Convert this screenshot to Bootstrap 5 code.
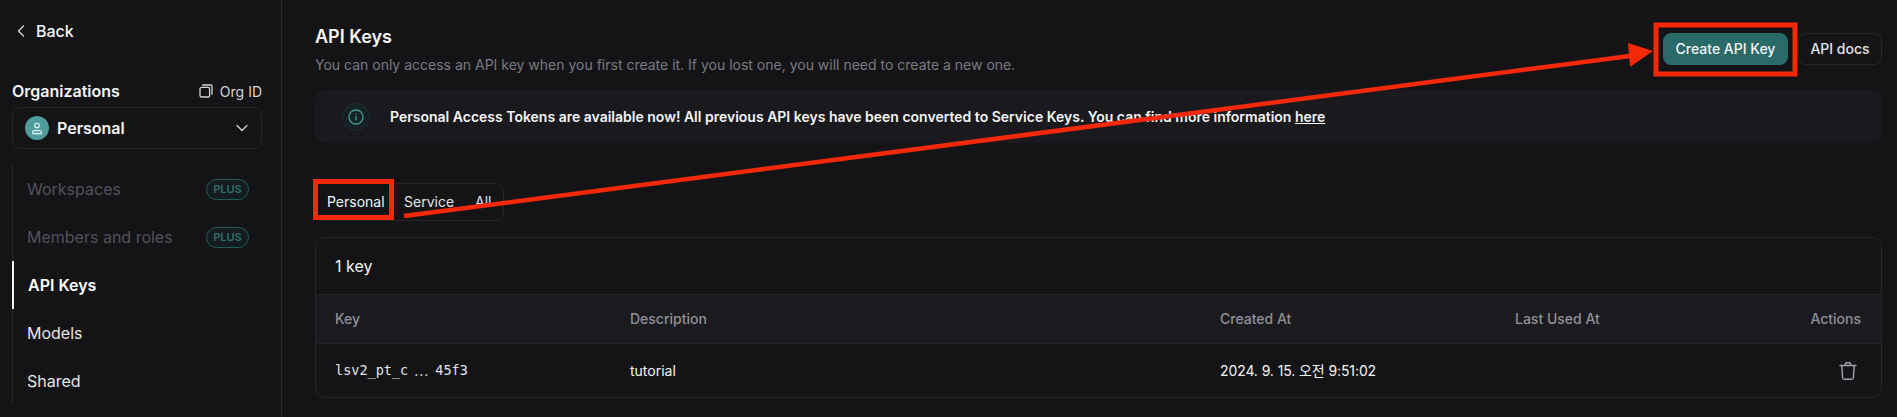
<!DOCTYPE html>
<html lang="ko">
<head>
  <meta charset="UTF-8" />
  <meta name="viewport" content="width=device-width, initial-scale=1" />
  <title>API Keys</title>
  <link href="https://cdn.jsdelivr.net/npm/bootstrap@5.3.0/dist/css/bootstrap.min.css" rel="stylesheet" />
  <style>
    html, body { height: 417px; overflow: hidden; }
    body { background: #141416; color: #f4f4f5; font-family: Inter, "Noto Sans CJK KR", sans-serif; font-size: 14px; }
    .shell { height: 417px; position: relative; }
    .side { width: 282px; flex: none; border-right: 1px solid #26262a; padding: 0 19px 0 12px; }
    .back-link { height: 62px; padding-left: 5px; gap: 11px; font-size: 16px; font-weight: 500; color: #f4f4f5; text-decoration: none; }
    .org-head { margin-top: 17px; height: 24px; }
    .org-title { font-size: 16px; font-weight: 600; }
    .org-id { font-size: 14px; color: #d4d4d8; gap: 7px; }
    .org-select { margin-top: 4px; height: 42px; padding: 0 13px 0 12px; border: 1px solid #26262a; border-radius: 8px; }
    .org-avatar { width: 24px; height: 24px; border-radius: 50%; background: #4f9c9c; margin-right: 8px; }
    .org-name { font-size: 16px; font-weight: 600; }
    .side-nav { margin-top: 16px; border-left: 1px solid #26262a; }
    .side-nav .nav-link { height: 48px; padding: 0 13px 0 13px; font-size: 16px; color: #e4e4e7; margin-left: -1px; border-left: 2px solid transparent; }
    .side-nav .nav-link.disabled { color: #52525b; }
    .side-nav .nav-link.active { color: #fff; font-weight: 600; border-left-color: #f4f4f5; padding-left: 14px; }
    .plus-tag { padding: 0; width: 43px; height: 21px; line-height: 19px; border: 1px solid #1f5e5a; border-radius: 11px; background: #141c1f; color: #2f6f6b; font-size: 11px; font-weight: 600; }
    .page-main { padding: 0 15px 0 33px; min-width: 0; }
    .top-row { padding-top: 25px; height: 90px; }
    .page-title { font-size: 18px; line-height: 24px; font-weight: 600; margin: 0 0 6px; }
    .page-sub { font-size: 14px; line-height: 20px; color: #7a7a82; margin: 0; }
    .top-actions { gap: 10px; padding-top: 8px; }
    .btn-create, .btn-docs { height: 32px; padding: 0; font-size: 14px; font-weight: 500; border-radius: 8px; line-height: 30px; }
    .btn-create { width: 125px; background: #2a6a68; border: 1px solid #2a6a68; color: #f4f4f5; }
    .btn-docs { width: 84px; background: transparent; border: 1px solid #26262a; color: #e4e4e7; }
    .note-box { height: 53px; margin: 0; padding: 0 0 0 27px; border: 0; border-radius: 10px; background: #1a1a1e; color: #f4f4f5; font-weight: 600; gap: 20px; }
    .note-box a { color: #f4f4f5; }
    .note-icon { width: 28px; height: 28px; border-radius: 50%; background: #152125; border: 1px solid #1b2d30; }
    .tab-strip { margin-top: 40px; width: 189px; height: 38px; border: 1px solid #26262a; border-radius: 8px; }
    .tab-strip .nav-link { padding: 0; height: 36px; line-height: 36px; color: #e4e4e7; font-size: 14px; }
    .tab-strip .tab-a { margin-left: 11px; width: 58px; color: #f4f4f5; }
    .tab-strip .tab-b { margin-left: 19px; }
    .tab-strip .tab-c { margin-left: 21px; }
    .key-card { margin-top: 16px; height: 161px; background: transparent; border: 1px solid #26262a; border-radius: 10px; overflow: hidden; color: #f4f4f5; }
    .key-count { height: 57px; flex: none; padding: 0 19px; font-size: 16px; border-bottom: 1px solid #26262a; }
    .key-table { table-layout: fixed; margin: 0; --bs-table-bg: transparent; --bs-table-color: #f4f4f5; }
    .key-table th, .key-table td { padding: 0 0 0 19px; vertical-align: middle; border: 0; font-size: 14px; }
    .key-table thead th { height: 48px; background: #1b1b1f; color: #909098; font-weight: 500; border-bottom: 1px solid #26262a; }
    .key-table tbody td { height: 54px; font-weight: 400; }
    .key-table .col-date { letter-spacing: -.1px; }
    .key-table .col-end { padding: 0 20px 0 0; text-align: right; }
    .key-mono { font-family: "DejaVu Sans Mono", "Liberation Mono", monospace; font-size: 13.5px; color: #e4e4e7; gap: 6px; }
    .key-dots { font-family: Inter, sans-serif; font-size: 14px; letter-spacing: 1px; }
    .trash-btn { background: none; border: 0; padding: 0; margin-right: 4px; color: #a1a1aa; line-height: 0; }
    .mark-layer { position: absolute; left: 0; top: 0; pointer-events: none; }
  </style>
</head>
<body>
  <div class="shell d-flex">
    <aside class="side">
      <a href="#" class="back-link d-flex align-items-center">
        <svg width="8" height="12" viewBox="0 0 8 12" fill="none" stroke="#d4d4d8" stroke-width="1.3" stroke-linecap="round" stroke-linejoin="round"><path d="M6.5 1 1.5 6l5 5"/></svg>
        Back
      </a>
      <div class="org-head d-flex justify-content-between align-items-center">
        <span class="org-title">Organizations</span>
        <span class="org-id d-flex align-items-center">
          <svg width="14" height="14" viewBox="0 0 14 14" fill="none" stroke="#d4d4d8" stroke-width="1.3"><rect x="1" y="3.4" width="9.6" height="9.6" rx="1.6"/><path d="M3.6 1h7.8A1.6 1.6 0 0 1 13 2.6v7.6" stroke-linecap="round"/></svg>
          Org ID
        </span>
      </div>
      <div class="org-select d-flex align-items-center">
        <span class="org-avatar d-flex align-items-center justify-content-center">
          <svg width="12" height="13" viewBox="0 0 12 13" fill="none" stroke="#e6f4f3" stroke-width="1.1"><circle cx="6" cy="3.6" r="2.3"/><path d="M1.6 11.6V10.400a1.800 1.800 0 0 1 1.800-1.800h5.200a1.800 1.800 0 0 1 1.800 1.800v1.200z" stroke-linejoin="round"/></svg>
        </span>
        <span class="org-name flex-grow-1">Personal</span>
        <svg width="12" height="8" viewBox="0 0 12 8" fill="none" stroke="#d4d4d8" stroke-width="1.3" stroke-linecap="round" stroke-linejoin="round"><path d="m1 1.500 5 5 5-5"/></svg>
      </div>
      <nav class="side-nav nav flex-column">
        <a class="nav-link disabled d-flex justify-content-between align-items-center" href="#">Workspaces <span class="badge plus-tag">PLUS</span></a>
        <a class="nav-link disabled d-flex justify-content-between align-items-center" href="#">Members and roles <span class="badge plus-tag">PLUS</span></a>
        <a class="nav-link active d-flex align-items-center" href="#">API Keys</a>
        <a class="nav-link d-flex align-items-center" href="#">Models</a>
        <a class="nav-link d-flex align-items-center" href="#">Shared</a>
      </nav>
    </aside>

    <main class="page-main flex-grow-1">
      <div class="top-row d-flex justify-content-between align-items-start">
        <div>
          <h1 class="page-title">API Keys</h1>
          <p class="page-sub">You can only access an API key when you first create it. If you lost one, you will need to create a new one.</p>
        </div>
        <div class="top-actions d-flex">
          <button type="button" class="btn btn-create">Create API Key</button>
          <button type="button" class="btn btn-docs">API docs</button>
        </div>
      </div>

      <div class="alert note-box d-flex align-items-center" role="alert">
        <span class="note-icon d-flex align-items-center justify-content-center">
          <svg width="16" height="16" viewBox="0 0 16 16" fill="none" stroke="#3d9c94" stroke-width="1.3" stroke-linecap="round"><circle cx="8" cy="8" r="7"/><path d="M8 7.500v3.500M8 5v.1"/></svg>
        </span>
        <span>Personal Access Tokens are available now! All previous API keys have been converted to Service Keys. You can find more information <a href="#">here</a></span>
      </div>

      <nav class="tab-strip nav">
        <a class="nav-link tab-a" href="#">Personal</a>
        <a class="nav-link tab-b" href="#">Service</a>
        <a class="nav-link tab-c" href="#">All</a>
      </nav>

      <div class="card key-card">
        <div class="key-count d-flex align-items-center">1 key</div>
        <table class="table key-table">
          <colgroup>
            <col style="width: 295px" /><col style="width: 590px" /><col style="width: 295px" /><col /><col style="width: 150px" />
          </colgroup>
          <thead>
            <tr><th>Key</th><th>Description</th><th>Created At</th><th>Last Used At</th><th class="col-end">Actions</th></tr>
          </thead>
          <tbody>
            <tr>
              <td><span class="key-mono d-flex align-items-center"><span>lsv2_pt_c</span><span class="key-dots">...</span><span>45f3</span></span></td>
              <td>tutorial</td>
              <td class="col-date">2024. 9. 15. 오전 9:51:02</td>
              <td></td>
              <td class="col-end">
                <button type="button" class="trash-btn" aria-label="Delete">
                  <svg width="18" height="20" viewBox="0 0 18 20" fill="none" stroke="currentColor" stroke-width="1.400" stroke-linecap="round" stroke-linejoin="round"><path d="M1 4.500h16M6.500 4.500V2.800c0-.6.400-1 1-1h3c.6 0 1 .400 1 1v1.700M2.800 4.500l.8 12.300c.1 1 .8 1.500 1.700 1.500h7.400c.9 0 1.600-.5 1.700-1.500l.8-12.300"/></svg>
                </button>
              </td>
            </tr>
          </tbody>
        </table>
      </div>
    </main>

    <!-- red annotation marks drawn over the page -->
    <svg class="mark-layer" width="1897" height="417" viewBox="0 0 1897 417" fill="none">
      <rect x="1656" y="25" width="139" height="49" stroke="#f5290a" stroke-width="5"/>
      <rect x="315.500" y="181.500" width="76" height="36" stroke="#f5290a" stroke-width="5"/>
      <path d="M404 216 1630 56" stroke="#f5290a" stroke-width="4.500"/>
      <path d="M1653 51 1628 43 1630 67z" fill="#f5290a"/>
    </svg>
  </div>
  <script src="https://cdn.jsdelivr.net/npm/bootstrap@5.3.0/dist/js/bootstrap.bundle.min.js"></script>
</body>
</html>
